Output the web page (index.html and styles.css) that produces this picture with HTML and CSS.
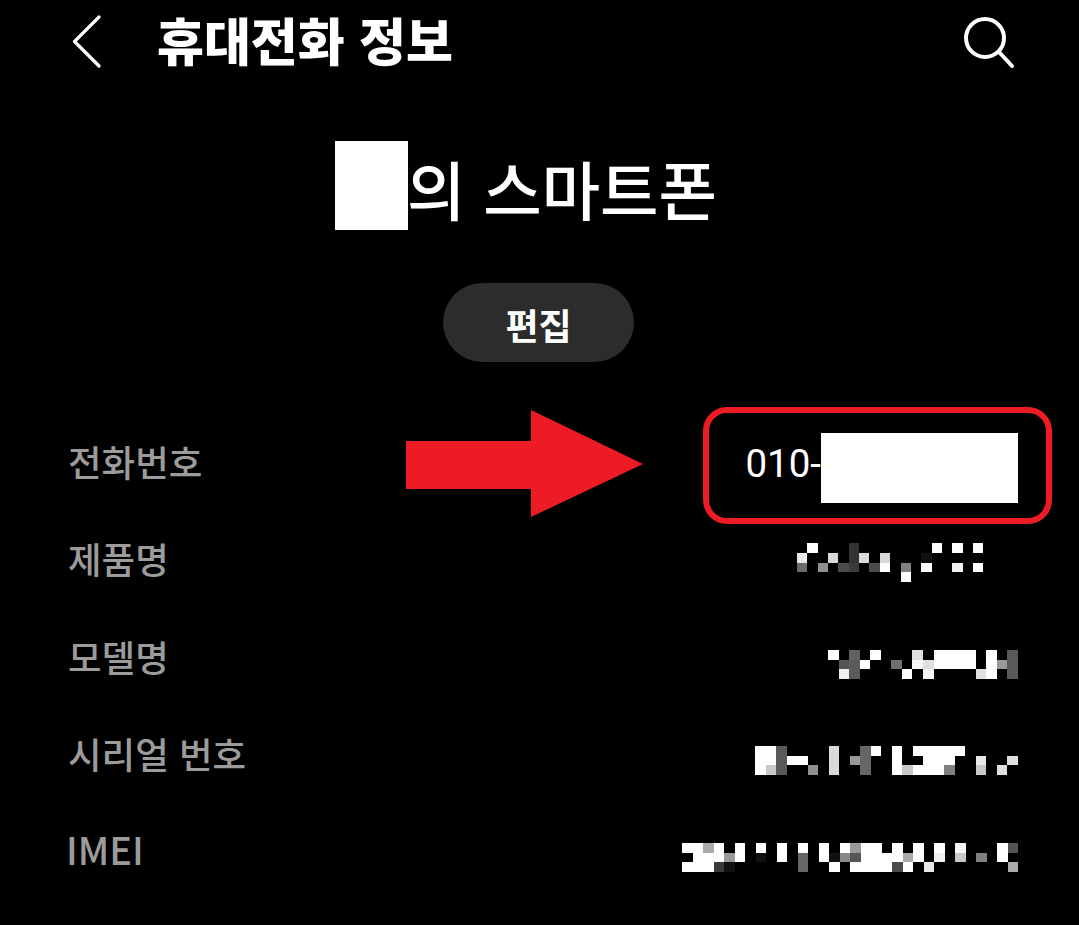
FILE: index.html
```html
<!DOCTYPE html>
<html lang="ko">
<head>
    <meta charset="UTF-8">
    <meta name="viewport" content="width=device-width, initial-scale=1.0">
    <title>휴대전화 정보</title>
    <link rel="stylesheet" href="styles.css">
</head>
<body>
    <div class="page">
        <header class="top-bar">
            <svg class="back-icon" viewBox="0 0 30 54"><path d="M27 2 L2.5 26.5 L27 51"/></svg>
            <h1>휴대전화 정보</h1>
            <svg class="search-icon" viewBox="0 0 54 54"><circle cx="23" cy="23" r="19"/><path d="M37 37 L50 51"/></svg>
        </header>

        <div class="device-name">
            <span class="name-mask"></span>
            <span class="name-text">의 스마트폰</span>
        </div>

        <div class="edit-wrap">
            <button class="edit-btn">편집</button>
        </div>

        <div class="info-list">
            <div class="info-row">
                <span class="label">전화번호</span>
                <span class="phone"><span class="phone-prefix">010-</span><span class="phone-mask"></span></span>
            </div>
            <div class="info-row">
                <span class="label">제품명</span>
                <svg class="mosaic mosaic-product" viewBox="0 0 21.35 4" preserveAspectRatio="none" shape-rendering="crispEdges">
                    <rect x="1" y="0" width="1" height="1" fill="#fff"/>
                    <rect x="5" y="0" width="1" height="1" fill="#333"/>
                    <rect x="13" y="0" width="1" height="1" fill="#fff"/>
                    <rect x="15" y="0" width="1" height="1" fill="#fff"/>
                    <rect x="17" y="0" width="1" height="1" fill="#fff"/>
                    <rect x="0" y="1" width="1" height="1" fill="#e8e8e8"/>
                    <rect x="3" y="1" width="1" height="1" fill="#d8d8d8"/>
                    <rect x="5" y="1" width="1" height="1" fill="#333"/>
                    <rect x="6" y="1" width="1" height="1" fill="#d8d8d8"/>
                    <rect x="8" y="1" width="1" height="1" fill="#d8d8d8"/>
                    <rect x="12" y="1" width="1" height="1" fill="#111"/>
                    <rect x="0" y="2" width="1" height="1" fill="#6a6a6a"/>
                    <rect x="2" y="2" width="1" height="1" fill="#909090"/>
                    <rect x="4" y="2" width="1" height="1" fill="#4a4a4a"/>
                    <rect x="5" y="2" width="1" height="1" fill="#3a3a3a"/>
                    <rect x="7" y="2" width="1" height="1" fill="#4a4a4a"/>
                    <rect x="8" y="2" width="1" height="1" fill="#fff"/>
                    <rect x="10" y="2" width="1" height="1" fill="#808080"/>
                    <rect x="12" y="2" width="1" height="1" fill="#fff"/>
                    <rect x="15" y="2" width="1" height="1" fill="#f0f0f0"/>
                    <rect x="17" y="2" width="1" height="1" fill="#fff"/>
                    <rect x="10" y="3" width="1" height="1" fill="#fff"/>
                </svg>
            </div>
            <div class="info-row">
                <span class="label">모델명</span>
                <svg class="mosaic mosaic-model" viewBox="0 0 18 3" preserveAspectRatio="none" shape-rendering="crispEdges">
                    <rect x="0" y="0" width="1" height="1" fill="#fff"/>
                    <rect x="2" y="0" width="1" height="1" fill="#606060"/>
                    <rect x="4" y="0" width="1" height="1" fill="#fff"/>
                    <rect x="8" y="0" width="1" height="1" fill="#e0e0e0"/>
                    <rect x="10" y="0" width="4" height="1" fill="#fff"/>
                    <rect x="15" y="0" width="1" height="1" fill="#fff"/>
                    <rect x="17" y="0" width="1" height="1" fill="#5a5a5a"/>
                    <rect x="1" y="1" width="1" height="1" fill="#555"/>
                    <rect x="2" y="1" width="1" height="1" fill="#5a5a5a"/>
                    <rect x="3" y="1" width="1" height="1" fill="#fff"/>
                    <rect x="6" y="1" width="1" height="1" fill="#707070"/>
                    <rect x="8" y="1" width="1" height="1" fill="#f5f5f5"/>
                    <rect x="9" y="1" width="1" height="1" fill="#e0e0e0"/>
                    <rect x="10" y="1" width="4" height="1" fill="#fff"/>
                    <rect x="15" y="1" width="1" height="1" fill="#fff"/>
                    <rect x="16" y="1" width="1" height="1" fill="#999"/>
                    <rect x="17" y="1" width="1" height="1" fill="#5a5a5a"/>
                    <rect x="1" y="2" width="1" height="1" fill="#f0f0f0"/>
                    <rect x="2" y="2" width="1" height="1" fill="#5a5a5a"/>
                    <rect x="7" y="2" width="1" height="1" fill="#fff"/>
                    <rect x="9" y="2" width="1" height="1" fill="#f5f5f5"/>
                    <rect x="14" y="2" width="1" height="1" fill="#e0e0e0"/>
                    <rect x="15" y="2" width="1" height="1" fill="#fff"/>
                    <rect x="17" y="2" width="1" height="1" fill="#5a5a5a"/>
                </svg>
            </div>
            <div class="info-row">
                <span class="label">시리얼 번호</span>
                <svg class="mosaic mosaic-serial" viewBox="0 0 25 3" preserveAspectRatio="none" shape-rendering="crispEdges">
                    <rect x="0" y="0" width="2" height="1" fill="#fff"/>
                    <rect x="2" y="0" width="1" height="1" fill="#5a5a5a"/>
                    <rect x="7" y="0" width="1" height="1" fill="#d8d8d8"/>
                    <rect x="10" y="0" width="1" height="1" fill="#666"/>
                    <rect x="11" y="0" width="1" height="1" fill="#fff"/>
                    <rect x="13" y="0" width="1" height="1" fill="#fff"/>
                    <rect x="15" y="0" width="5" height="1" fill="#fff"/>
                    <rect x="0" y="1" width="2" height="1" fill="#fff"/>
                    <rect x="2" y="1" width="1" height="1" fill="#5a5a5a"/>
                    <rect x="3" y="1" width="2" height="1" fill="#fff"/>
                    <rect x="7" y="1" width="1" height="1" fill="#d8d8d8"/>
                    <rect x="9" y="1" width="1" height="1" fill="#999"/>
                    <rect x="10" y="1" width="1" height="1" fill="#666"/>
                    <rect x="13" y="1" width="1" height="1" fill="#fff"/>
                    <rect x="16" y="1" width="3" height="1" fill="#fff"/>
                    <rect x="21" y="1" width="1" height="1" fill="#e8e8e8"/>
                    <rect x="24" y="1" width="1" height="1" fill="#e0e0e0"/>
                    <rect x="0" y="2" width="1" height="1" fill="#fff"/>
                    <rect x="1" y="2" width="1" height="1" fill="#c8c8c8"/>
                    <rect x="2" y="2" width="1" height="1" fill="#5a5a5a"/>
                    <rect x="5" y="2" width="1" height="1" fill="#909090"/>
                    <rect x="7" y="2" width="1" height="1" fill="#d8d8d8"/>
                    <rect x="10" y="2" width="1" height="1" fill="#666"/>
                    <rect x="13" y="2" width="1" height="1" fill="#fff"/>
                    <rect x="14" y="2" width="1" height="1" fill="#c8c8c8"/>
                    <rect x="15" y="2" width="3" height="1" fill="#fff"/>
                    <rect x="18" y="2" width="1" height="1" fill="#808080"/>
                    <rect x="21" y="2" width="1" height="1" fill="#c8c8c8"/>
                    <rect x="23" y="2" width="1" height="1" fill="#e0e0e0"/>
                </svg>
            </div>
            <div class="info-row">
                <span class="label label-latin">IMEI</span>
                <svg class="mosaic mosaic-imei" viewBox="0 0 32 3" preserveAspectRatio="none" shape-rendering="crispEdges">
                    <rect x="0" y="0" width="2" height="1" fill="#fff"/>
                    <rect x="2" y="0" width="1" height="1" fill="#aaa"/>
                    <rect x="3" y="0" width="1" height="1" fill="#fff"/>
                    <rect x="5" y="0" width="1" height="1" fill="#fff"/>
                    <rect x="7" y="0" width="1" height="1" fill="#fff"/>
                    <rect x="9" y="0" width="1" height="1" fill="#fff"/>
                    <rect x="11" y="0" width="1" height="1" fill="#fff"/>
                    <rect x="13" y="0" width="1" height="1" fill="#fff"/>
                    <rect x="15" y="0" width="1" height="1" fill="#fff"/>
                    <rect x="16" y="0" width="1" height="1" fill="#999"/>
                    <rect x="17" y="0" width="2" height="1" fill="#fff"/>
                    <rect x="20" y="0" width="1" height="1" fill="#fff"/>
                    <rect x="22" y="0" width="1" height="1" fill="#fff"/>
                    <rect x="24" y="0" width="1" height="1" fill="#fff"/>
                    <rect x="26" y="0" width="1" height="1" fill="#f5f5f5"/>
                    <rect x="30" y="0" width="1" height="1" fill="#fff"/>
                    <rect x="31" y="0" width="1" height="1" fill="#555"/>
                    <rect x="1" y="1" width="3" height="1" fill="#fff"/>
                    <rect x="4" y="1" width="1" height="1" fill="#999"/>
                    <rect x="5" y="1" width="1" height="1" fill="#fff"/>
                    <rect x="7" y="1" width="1" height="1" fill="#111"/>
                    <rect x="9" y="1" width="1" height="1" fill="#fff"/>
                    <rect x="11" y="1" width="1" height="1" fill="#666"/>
                    <rect x="13" y="1" width="1" height="1" fill="#fff"/>
                    <rect x="14" y="1" width="1" height="1" fill="#111"/>
                    <rect x="15" y="1" width="1" height="1" fill="#888"/>
                    <rect x="16" y="1" width="1" height="1" fill="#555"/>
                    <rect x="17" y="1" width="4" height="1" fill="#fff"/>
                    <rect x="21" y="1" width="1" height="1" fill="#aaa"/>
                    <rect x="22" y="1" width="1" height="1" fill="#fff"/>
                    <rect x="24" y="1" width="1" height="1" fill="#f0f0f0"/>
                    <rect x="26" y="1" width="1" height="1" fill="#c8c8c8"/>
                    <rect x="28" y="1" width="1" height="1" fill="#808080"/>
                    <rect x="30" y="1" width="1" height="1" fill="#fff"/>
                    <rect x="0" y="2" width="3" height="1" fill="#fff"/>
                    <rect x="3" y="2" width="1" height="1" fill="#3a3a3a"/>
                    <rect x="4" y="2" width="1" height="1" fill="#111"/>
                    <rect x="11" y="2" width="1" height="1" fill="#666"/>
                    <rect x="14" y="2" width="1" height="1" fill="#fff"/>
                    <rect x="16" y="2" width="4" height="1" fill="#fff"/>
                    <rect x="20" y="2" width="1" height="1" fill="#4a4a4a"/>
                    <rect x="21" y="2" width="1" height="1" fill="#fff"/>
                    <rect x="23" y="2" width="1" height="1" fill="#e8e8e8"/>
                    <rect x="31" y="2" width="1" height="1" fill="#aaa"/>
                </svg>
            </div>
        </div>

        <!-- red annotations drawn over the screenshot -->
        <svg class="red-arrow" viewBox="0 0 238 108"><path d="M0 31 H125 V0 L237 54 L125 107 V79 H0 Z"/></svg>
        <div class="red-box"></div>
    </div>
</body>
</html>
```

FILE: styles.css
```css
* {
    box-sizing: border-box;
}
body {
    margin: 0;
    background-color: #000;
    color: #fff;
    font-family: "Noto Sans CJK KR", Roboto, sans-serif;
}
.page {
    position: relative;
    height: 925px;
    overflow: hidden;
}
.top-bar {
    display: flex;
    align-items: center;
    height: 84px;
    padding: 0 63px 0 72px;
}
.back-icon {
    width: 30px;
    height: 54px;
    fill: none;
    stroke: #fff;
    stroke-width: 3.2;
    stroke-linecap: round;
    stroke-linejoin: round;
}
h1 {
    flex: 1;
    margin: 0 0 6px 55px;
    font-size: 51px;
    font-weight: 900;
    line-height: 1;
}
.search-icon {
    width: 54px;
    height: 54px;
    fill: none;
    stroke: #fff;
    stroke-width: 4;
    stroke-linecap: round;
}
.device-name {
    display: flex;
    justify-content: center;
    align-items: center;
    margin-top: 57px;
    height: 89px;
    padding-right: 27px;
}
.name-mask {
    width: 73px;
    height: 89px;
    margin-right: -1px;
    background-color: #fff;
}
.name-text {
    margin-top: 5px;
    font-size: 63.5px;
    font-weight: 500;
    line-height: 1;
}
.edit-wrap {
    display: flex;
    justify-content: center;
    margin-top: 53px;
    padding-right: 2px;
}
.edit-btn {
    width: 191px;
    height: 79px;
    padding-top: 4px;
    border: none;
    border-radius: 40px;
    background-color: #2c2c2c;
    color: #fff;
    font-family: inherit;
    font-size: 36px;
    font-weight: 700;
}
.info-list {
    margin-top: 51px;
    padding: 0 61px 0 68px;
}
.info-row {
    display: flex;
    justify-content: space-between;
    align-items: center;
    height: 97.5px;
}
.label {
    color: #9b9b9b;
    font-size: 36.5px;
    font-weight: 500;
    line-height: 1;
}
.label-latin {
    margin: 0 0 6px -2px;
    font-size: 38px;
}
.phone {
    display: flex;
    align-items: center;
    margin-top: 12px;
    font-family: Roboto, sans-serif;
    font-size: 38.5px;
    line-height: 1;
}
.phone-prefix {
    margin-bottom: 7px;
}
.phone-mask {
    width: 197px;
    height: 70px;
    background-color: #fff;
}
.mosaic {
    display: block;
}
.mosaic-product {
    width: 221px;
    height: 39px;
    margin-top: 7px;
}
.mosaic-model {
    width: 190px;
    height: 29px;
    margin-top: 15px;
}
.mosaic-serial {
    width: 263px;
    height: 29px;
    margin-top: 13px;
}
.mosaic-imei {
    width: 336px;
    height: 29px;
    margin-top: 11px;
}
.red-arrow {
    position: absolute;
    left: 406px;
    top: 410px;
    width: 238px;
    height: 108px;
    fill: #ed1c24;
}
.red-box {
    position: absolute;
    left: 703px;
    top: 407px;
    width: 349px;
    height: 117px;
    border: 6px solid #ed1c24;
    border-radius: 24px;
}
```
